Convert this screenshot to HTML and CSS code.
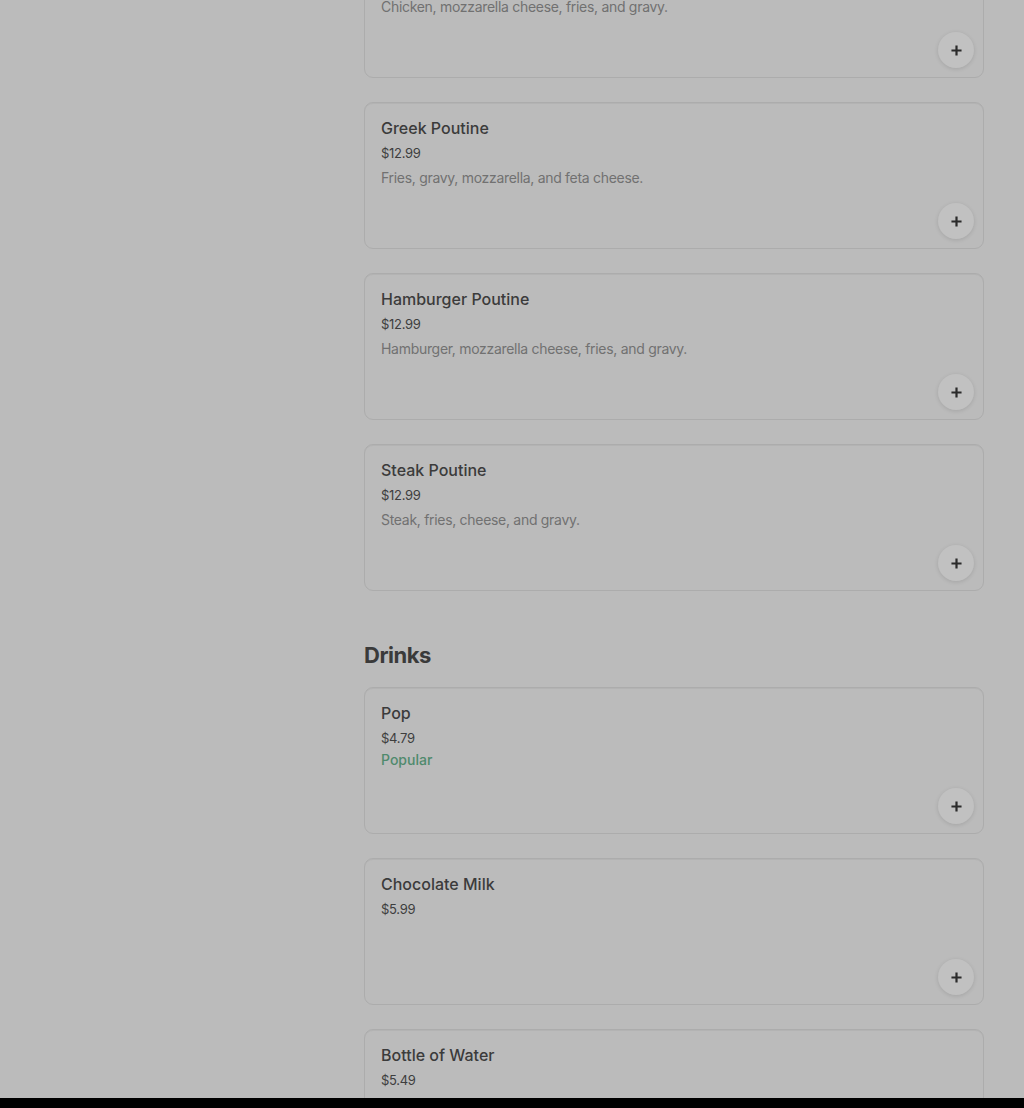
FILE: index.html
```html
<!DOCTYPE html>
<html lang="en">
<head>
<meta charset="utf-8">
<title>Menu</title>
<link rel="stylesheet" href="styles.css">
</head>
<body>
<main class="menu">
  <section class="section section-first">
    <div class="list">
      <article class="card">
        <h3 class="name">Chicken Poutine</h3>
        <div class="price">$12.99</div>
        <p class="desc">Chicken, mozzarella cheese, fries, and gravy.</p>
        <button class="add" aria-label="Add"><svg viewBox="0 0 12 12" width="11" height="11"><path d="M6 0.5v11M0.5 6h11" stroke="currentColor" stroke-width="2.4" fill="none"/></svg></button>
      </article>
      <article class="card">
        <h3 class="name">Greek Poutine</h3>
        <div class="price">$12.99</div>
        <p class="desc">Fries, gravy, mozzarella, and feta cheese.</p>
        <button class="add" aria-label="Add"><svg viewBox="0 0 12 12" width="11" height="11"><path d="M6 0.5v11M0.5 6h11" stroke="currentColor" stroke-width="2.4" fill="none"/></svg></button>
      </article>
      <article class="card">
        <h3 class="name">Hamburger Poutine</h3>
        <div class="price">$12.99</div>
        <p class="desc">Hamburger, mozzarella cheese, fries, and gravy.</p>
        <button class="add" aria-label="Add"><svg viewBox="0 0 12 12" width="11" height="11"><path d="M6 0.5v11M0.5 6h11" stroke="currentColor" stroke-width="2.4" fill="none"/></svg></button>
      </article>
      <article class="card">
        <h3 class="name">Steak Poutine</h3>
        <div class="price">$12.99</div>
        <p class="desc">Steak, fries, cheese, and gravy.</p>
        <button class="add" aria-label="Add"><svg viewBox="0 0 12 12" width="11" height="11"><path d="M6 0.5v11M0.5 6h11" stroke="currentColor" stroke-width="2.4" fill="none"/></svg></button>
      </article>
    </div>
  </section>
  <section class="section">
    <h2 class="heading">Drinks</h2>
    <div class="list">
      <article class="card">
        <h3 class="name">Pop</h3>
        <div class="price">$4.79</div>
        <p class="popular">Popular</p>
        <button class="add" aria-label="Add"><svg viewBox="0 0 12 12" width="11" height="11"><path d="M6 0.5v11M0.5 6h11" stroke="currentColor" stroke-width="2.4" fill="none"/></svg></button>
      </article>
      <article class="card">
        <h3 class="name">Chocolate Milk</h3>
        <div class="price">$5.99</div>
        <button class="add" aria-label="Add"><svg viewBox="0 0 12 12" width="11" height="11"><path d="M6 0.5v11M0.5 6h11" stroke="currentColor" stroke-width="2.4" fill="none"/></svg></button>
      </article>
      <article class="card">
        <h3 class="name">Bottle of Water</h3>
        <div class="price">$5.49</div>
        <button class="add" aria-label="Add"><svg viewBox="0 0 12 12" width="11" height="11"><path d="M6 0.5v11M0.5 6h11" stroke="currentColor" stroke-width="2.4" fill="none"/></svg></button>
      </article>
    </div>
  </section>
</main>
<div class="bottom-bar"></div>
</body>
</html>
```
FILE: styles.css
```css
html, body {
  margin: 0;
  padding: 0;
  background: #bbbbbb;
  font-family: Inter, "Noto Sans", "Liberation Sans", sans-serif;
  overflow: hidden;
}

.menu {
  width: 620px;
  margin-left: 364px;
  margin-top: -69px;
}

.section + .section {
  margin-top: 48px;
}

.heading {
  margin: 0 0 16px;
  font-size: 22px;
  line-height: 32px;
  font-weight: 700;
  letter-spacing: -0.5px;
  color: #3a3a3a;
}

.list {
  display: flex;
  flex-direction: column;
  gap: 24px;
}

.card {
  box-sizing: border-box;
  height: 147px;
  border: 1px solid #acacac;
  border-radius: 9px;
  padding: 14px 9px 9px 16px;
  display: flex;
  flex-direction: column;
  align-items: flex-start;
  box-shadow: inset 0 1px 0 #b3b3b3;
}

.name {
  margin: 0;
  font-size: 16px;
  line-height: 22px;
  font-weight: 500;
  color: #3b3b3b;
  letter-spacing: 0;
}

.price {
  margin-top: 5px;
  font-size: 13px;
  line-height: 18px;
  color: #3e3e3e;
  letter-spacing: -0.3px;
}

.desc {
  margin: 6px 0 0;
  font-size: 14px;
  line-height: 18px;
  color: #717171;
  letter-spacing: -0.3px;
  position: relative;
  top: 1px;
}

.popular {
  margin: 4px 0 0;
  font-size: 14px;
  line-height: 18px;
  font-weight: 500;
  color: #4f8a6d;
}

.add {
  margin-top: auto;
  align-self: flex-end;
  width: 36px;
  height: 36px;
  border: none;
  border-radius: 50%;
  background: #c1c1c1;
  color: #2b2b2b;
  display: flex;
  align-items: center;
  justify-content: center;
  padding: 0;
  box-shadow: 0 1px 4px rgba(0, 0, 0, 0.12);
}

.add svg {
  display: block;
}

.bottom-bar {
  position: fixed;
  left: 0;
  right: 0;
  bottom: 0;
  height: 10px;
  background: #000;
}
```
